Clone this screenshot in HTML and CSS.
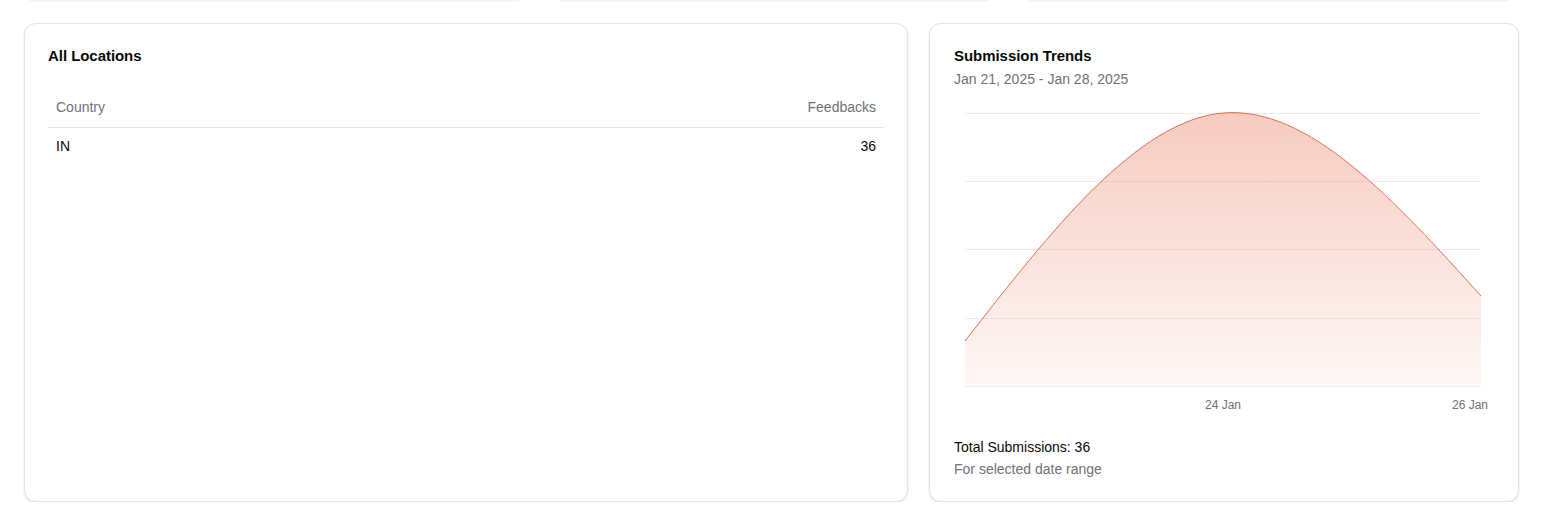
FILE: index.html
```html
<!DOCTYPE html>
<html lang="en">
<head>
<meta charset="utf-8">
<title>Dashboard</title>
<link rel="stylesheet" href="styles.css">
</head>
<body>
<div class="prev-row">
  <div class="prev-card"></div>
  <div class="prev-card"></div>
  <div class="prev-card"></div>
</div>
<main class="grid">
  <section class="card">
    <h2 class="card-title">All Locations</h2>
    <table class="table">
      <thead>
        <tr><th class="left">Country</th><th class="right">Feedbacks</th></tr>
      </thead>
      <tbody>
        <tr><td class="left">IN</td><td class="right">36</td></tr>
      </tbody>
    </table>
  </section>
  <section class="card trend">
    <h2 class="card-title">Submission Trends</h2>
    <p class="card-sub">Jan 21, 2025 - Jan 28, 2025</p>
    <svg class="chart" viewBox="0 0 540 313" width="540" height="313">
      <defs>
        <linearGradient id="fillArea" x1="0" y1="0" x2="0" y2="1">
          <stop offset="0%" stop-color="#e76e50" stop-opacity="0.36"/>
          <stop offset="100%" stop-color="#e76e50" stop-opacity="0.05"/>
        </linearGradient>
      </defs>
      <g class="grid-lines">
        <line x1="11" x2="527" y1="13.5" y2="13.5"/>
        <line x1="11" x2="527" y1="81.5" y2="81.5"/>
        <line x1="11" x2="527" y1="149.5" y2="149.5"/>
        <line x1="11" x2="527" y1="218.5" y2="218.5"/>
        <line x1="11" x2="527" y1="286.5" y2="286.5"/>
      </g>
      <path class="area" d="M11,241 C97,130.7 183,20.5 269,13 C355,5.5 441,100.8 527,196 L527,286 L11,286 Z" fill="url(#fillArea)"/>
      <path class="line" d="M11,241 C97,130.7 183,20.5 269,13 C355,5.5 441,100.8 527,196"/>
      <text class="tick" x="269" y="309" text-anchor="middle">24 Jan</text>
      <text class="tick" x="534" y="309" text-anchor="end">26 Jan</text>
    </svg>
    <div class="footer">
      <div class="total">Total Submissions: 36</div>
      <div class="footnote">For selected date range</div>
    </div>
  </section>
</main>
</body>
</html>
```

FILE: styles.css
```css
* { box-sizing: border-box; }

html, body {
  margin: 0;
  padding: 0;
  background: #ffffff;
  font-family: "Liberation Sans", Arial, Helvetica, sans-serif;
  color: #09090b;
}

.prev-row {
  display: grid;
  grid-template-columns: 489px 430px 480px;
  column-gap: 40px;
  padding-left: 30px;
  height: 2px;
  margin-bottom: 21px;
}

.prev-card {
  height: 1px;
  background: #f1f1f2;
  box-shadow: 0 1px 1px rgba(0, 0, 0, 0.03);
}

.grid {
  display: grid;
  grid-template-columns: 884px 590px;
  column-gap: 21px;
  padding-left: 24px;
}

.card {
  background: #fff;
  border: 1px solid #e4e4e7;
  border-radius: 12px;
  box-shadow: 0 1px 3px rgba(0, 0, 0, 0.08), 0 1px 2px rgba(0, 0, 0, 0.04);
  padding: 24px 23px 22px 23px;
  display: flex;
  flex-direction: column;
}

.trend {
  padding-left: 24px;
  padding-right: 22px;
}

.card-title {
  margin: 0;
  font-size: 15px;
  line-height: 15px;
  font-weight: 700;
  letter-spacing: -0.05px;
}

.card-sub {
  margin: 6px 0 0 0;
  font-size: 14px;
  line-height: 20px;
  color: #71717a;
}

.table {
  width: 100%;
  border-collapse: collapse;
  margin-top: 24px;
  font-size: 14px;
}

.table th {
  height: 40px;
  padding: 0 8px;
  font-weight: 400;
  color: #71717a;
  border-bottom: 1px solid #e4e4e7;
  vertical-align: middle;
}

.table td {
  padding: 8px;
  line-height: 20px;
  color: #09090b;
}

.left { text-align: left; }
.right { text-align: right; }

.chart {
  display: block;
  margin-top: 11px;
}

.grid-lines line {
  stroke: #ececee;
  stroke-width: 1;
}

.line {
  fill: none;
  stroke: #e76e50;
  stroke-width: 1;
}

.tick {
  font-family: "Liberation Sans", Arial, sans-serif;
  font-size: 12px;
  fill: #71717a;
}

.footer {
  margin-top: 24px;
  display: flex;
  flex-direction: column;
  gap: 2px;
  font-size: 14px;
  line-height: 20px;
}

.total { color: #09090b; }
.footnote { color: #71717a; }
```
